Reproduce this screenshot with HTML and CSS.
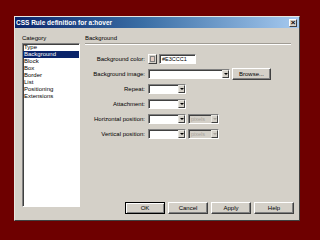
FILE: index.html
```html
<!DOCTYPE html>
<html>
<head>
<meta charset="utf-8">
<link rel="stylesheet" href="styles.css">
</head>
<body>
<div class="dialog">
  <div class="titlebar">
    <span class="title">CSS Rule definition for a:hover</span>
    <span class="close">×</span>
  </div>
  <div class="main">
    <div class="left">
      <div class="label">Category</div>
      <ul class="list">
        <li>Type</li>
        <li class="sel">Background</li>
        <li>Block</li>
        <li>Box</li>
        <li>Border</li>
        <li>List</li>
        <li>Positioning</li>
        <li>Extensions</li>
      </ul>
    </div>
    <div class="right">
      <div class="label">Background</div>
      <div class="sep"></div>
      <div class="form">
        <div class="row">
          <span class="lbl">Background color:</span>
          <span class="swatch"><span class="chip"></span></span>
          <span class="field colortext">#E3CCC1</span>
        </div>
        <div class="row">
          <span class="lbl">Background image:</span>
          <span class="field select wide"><span class="val"></span><span class="arrow"></span></span>
          <span class="btn browse">Browse...</span>
        </div>
        <div class="row">
          <span class="lbl">Repeat:</span>
          <span class="field select small"><span class="val"></span><span class="arrow"></span></span>
        </div>
        <div class="row">
          <span class="lbl">Attachment:</span>
          <span class="field select small"><span class="val"></span><span class="arrow"></span></span>
        </div>
        <div class="row">
          <span class="lbl">Horizontal position:</span>
          <span class="field select small"><span class="val"></span><span class="arrow"></span></span>
          <span class="field select unit disabled"><span class="val">pixels</span><span class="arrow"></span></span>
        </div>
        <div class="row">
          <span class="lbl">Vertical position:</span>
          <span class="field select small"><span class="val"></span><span class="arrow"></span></span>
          <span class="field select unit disabled"><span class="val">pixels</span><span class="arrow"></span></span>
        </div>
      </div>
      <div class="buttons">
        <span class="btn default">OK</span>
        <span class="btn">Cancel</span>
        <span class="btn">Apply</span>
        <span class="btn">Help</span>
      </div>
    </div>
  </div>
</div>
</body>
</html>
```
FILE: styles.css
```css
html, body {
  margin: 0;
  padding: 0;
}
body {
  width: 320px;
  height: 240px;
  background: #6e0000;
  padding: 16px 0 0 14px;
  box-sizing: border-box;
  font-family: "Liberation Sans", Arial, sans-serif;
  font-size: 6px;
  color: #000;
  overflow: hidden;
}
.dialog {
  width: 286px;
  height: 205px;
  box-sizing: border-box;
  background: #d4d0c8;
  border: 1px solid;
  border-color: #e8e6e0 #404040 #404040 #e8e6e0;
  display: flex;
  flex-direction: column;
}
.titlebar {
  height: 11px;
  background: linear-gradient(90deg, #0a246a 0%, #3a6ea5 45%, #a6caf0 100%);
  display: flex;
  align-items: center;
  justify-content: space-between;
  padding: 0 2px 0 1px;
}
.title {
  color: #fff;
  font-weight: bold;
  font-size: 6.5px;
  line-height: 11px;
  white-space: nowrap;
}
.close {
  width: 8px;
  height: 8px;
  box-sizing: border-box;
  background: #d4d0c8;
  border: 1px solid;
  border-color: #fff #404040 #404040 #fff;
  font-size: 8px;
  line-height: 5px;
  text-align: center;
  font-weight: bold;
  color: #000;
}
.main {
  flex: 1;
  display: flex;
  padding-top: 7px;
}
.left {
  margin-left: 7px;
  width: 58px;
}
.label {
  line-height: 7px;
  height: 7px;
  white-space: nowrap;
}
.list {
  list-style: none;
  margin: 1px 0 0;
  padding: 0;
  height: 164px;
  box-sizing: border-box;
  background: #fff;
  border: 1px solid;
  border-color: #808080 #fff #fff #808080;
  box-shadow: inset 1px 1px 0 #404040;
}
.list li {
  height: 7px;
  line-height: 7px;
  padding-left: 1px;
  white-space: nowrap;
}
.list li.sel {
  background: #0a246a;
  color: #fff;
}
.right {
  margin-left: 5px;
  width: 209px;
  display: flex;
  flex-direction: column;
}
.sep {
  margin-top: 1px;
  margin-right: 3px;
  height: 0;
  border-top: 1px solid #a09c94;
  border-bottom: 1px solid #fff;
}
.form {
  margin-top: 8px;
  display: flex;
  flex-direction: column;
  gap: 4px;
}
.row {
  height: 11px;
  display: flex;
  align-items: center;
}
.lbl {
  width: 60px;
  margin-right: 3px;
  text-align: right;
  white-space: nowrap;
}
.field {
  height: 10px;
  box-sizing: border-box;
  background: #fff;
  border: 1px solid;
  border-color: #808080 #fff #fff #808080;
  box-shadow: inset 1px 1px 0 #404040;
  display: flex;
  align-items: center;
}
.swatch {
  width: 9px;
  height: 10px;
  box-sizing: border-box;
  background: #d4d0c8;
  border: 1px solid;
  border-color: #fff #404040 #404040 #fff;
  padding: 1px;
  display: flex;
}
.chip {
  flex: 1;
  background: #e3ccc1;
  border: 1px solid #808080;
}
.colortext {
  margin-left: 2px;
  width: 37px;
  padding-left: 2px;
  font-size: 5.5px;
}
.select .val {
  flex: 1;
  padding-left: 2px;
  font-size: 5.5px;
}
.arrow {
  width: 7px;
  height: 8px;
  box-sizing: border-box;
  background: #d4d0c8;
  border: 1px solid;
  border-color: #e8e6e0 #404040 #404040 #e8e6e0;
  position: relative;
  display: flex;
  align-items: center;
  justify-content: center;
}
.arrow::after {
  content: "";
  border-left: 2px solid transparent;
  border-right: 2px solid transparent;
  border-top: 2px solid #000;
}
.wide { width: 82px; }
.small { width: 38px; }
.unit {
  width: 31px;
  margin-left: 2px;
}
.disabled {
  background: #d4d0c8;
  color: #a8a49c;
}
.disabled .arrow::after {
  border-top-color: #a8a49c;
}
.btn {
  height: 12px;
  box-sizing: border-box;
  background: #d4d0c8;
  border: 1px solid;
  border-color: #fff #404040 #404040 #fff;
  box-shadow: inset -1px -1px 0 #808080;
  display: flex;
  align-items: center;
  justify-content: center;
  white-space: nowrap;
}
.browse {
  width: 39px;
  margin-left: 2px;
}
.buttons {
  margin-top: auto;
  margin-bottom: 6px;
  display: flex;
  justify-content: flex-end;
  gap: 3px;
}
.buttons .btn {
  width: 40px;
}
.buttons .btn.default {
  border-color: #000;
  box-shadow: inset 1px 1px 0 #fff, inset -1px -1px 0 #808080;
}
```
